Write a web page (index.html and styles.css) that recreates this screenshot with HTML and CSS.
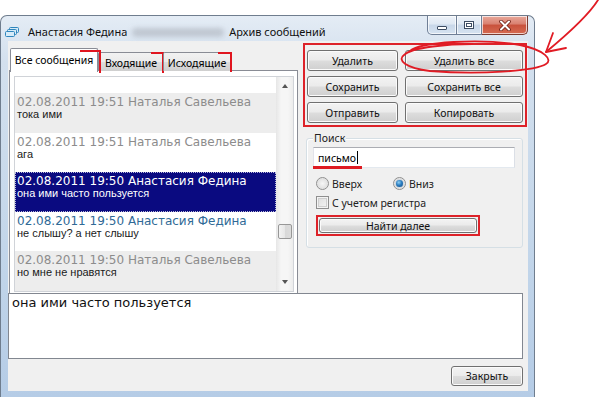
FILE: index.html
```html
<!DOCTYPE html>
<html lang="ru">
<head>
<meta charset="utf-8">
<title>Архив сообщений</title>
<link rel="stylesheet" href="styles.css">
</head>
<body>
<div class="window">
  <div class="titlebar">
    <svg class="appicon" width="14" height="11" viewBox="0 0 14 11">
      <rect x="4.5" y="0.5" width="9" height="5" rx="1" fill="#d6ebf8" stroke="#2f86bd"/>
      <rect x="2.5" y="2.5" width="9" height="5" rx="1" fill="#d6ebf8" stroke="#2f86bd"/>
      <rect x="0.5" y="4.5" width="9" height="5" rx="1" fill="#d6ebf8" stroke="#2f86bd"/>
    </svg>
    <span class="title">Анастасия Федина</span>
    <span class="blur"></span>
    <span class="title">Архив сообщений</span>
    <div class="controls">
      <div class="cbtn cmin"><span class="minbar"></span></div>
      <div class="cbtn cmax"><span class="maxbox"></span></div>
      <div class="cbtn cclose">
        <svg width="14" height="11" viewBox="0 0 14 11">
          <path d="M3 1.5 L11 9.5 M11 1.5 L3 9.5" stroke="#6b1e14" stroke-width="3.6" stroke-linecap="round"/>
          <path d="M3 1.5 L11 9.5 M11 1.5 L3 9.5" stroke="#ffffff" stroke-width="2" stroke-linecap="round"/>
        </svg>
      </div>
    </div>
  </div>
  <div class="client">
    <div class="toprow">
      <div class="tabs">
        <div class="tabstrip">
          <div class="tab active t1">Все сообщения</div>
          <div class="tab t2">Входящие</div>
          <div class="tab t3">Исходящие</div>
        </div>
        <div class="tabbody">
          <div class="list">
            <div class="items">
              <div class="item alt">
                <div class="hdr">02.08.2011 19:51 Наталья Савельева</div>
                <div class="msg">тока ими</div>
              </div>
              <div class="item">
                <div class="hdr">02.08.2011 19:51 Наталья Савельева</div>
                <div class="msg">ага</div>
              </div>
              <div class="item sel">
                <div class="hdr">02.08.2011 19:50 Анастасия Федина</div>
                <div class="msg">она ими часто пользуется</div>
              </div>
              <div class="item">
                <div class="hdr me">02.08.2011 19:50 Анастасия Федина</div>
                <div class="msg">не слышу? а нет слышу</div>
              </div>
              <div class="item alt">
                <div class="hdr">02.08.2011 19:50 Наталья Савельева</div>
                <div class="msg">но мне не нравятся</div>
              </div>
            </div>
            <div class="scrollbar">
              <div class="sbtn"><span class="arr up"></span></div>
              <div class="track"><div class="thumb"></div></div>
              <div class="sbtn"><span class="arr down"></span></div>
            </div>
          </div>
        </div>
      </div>
      <div class="side">
        <div class="btngroup">
          <div class="btn">Удалить</div>
          <div class="btn">Удалить все</div>
          <div class="btn">Сохранить</div>
          <div class="btn">Сохранить все</div>
          <div class="btn">Отправить</div>
          <div class="btn">Копировать</div>
        </div>
        <div class="search">
          <div class="legend">Поиск</div>
          <div class="input"><span class="val">письмо</span><span class="caret"></span></div>
          <div class="radios">
            <div class="opt up"><span class="radio"></span><span>Вверх</span></div>
            <div class="opt"><span class="radio on"></span><span>Вниз</span></div>
          </div>
          <div class="opt check"><span class="checkbox"></span><span>С учетом регистра</span></div>
          <div class="redbox"><div class="btn find">Найти далее</div></div>
        </div>
      </div>
    </div>
    <div class="memo">она ими часто пользуется</div>
    <div class="bottom"><div class="btn closebtn">Закрыть</div></div>
  </div>
</div>
<svg class="annot" width="600" height="397" viewBox="0 0 600 397">
  <path d="M410 51 C420 42, 480 38, 520 45 C545 50, 553 60, 546 64 C535 71, 480 75, 430 71 C405 68, 397 60, 404 55 C412 47, 450 44, 472 44" fill="none" stroke="#e11b24" stroke-width="1.8" stroke-linecap="round"/>
  <path d="M598 0 C590 13, 575 28, 546 52" fill="none" stroke="#e11b24" stroke-width="1.8" stroke-linecap="round"/>
  <path d="M553 33 L546 52 L566 48" fill="none" stroke="#e11b24" stroke-width="1.8" stroke-linecap="round" stroke-linejoin="round"/>
</svg>
</body>
</html>
```
FILE: styles.css
```css
* { box-sizing: border-box; }
html, body { margin: 0; padding: 0; }
body {
  width: 600px;
  height: 397px;
  overflow: hidden;
  position: relative;
  background: #ffffff;
  font-family: "Noto Sans", "Open Sans", sans-serif;
  font-size: 10.5px;
  color: #000;
}

.window {
  margin-top: 15px;
  width: 535px;
  height: 382px;
  border: 1px solid #6f7d8e;
  border-bottom: none;
  border-radius: 7px 7px 0 0;
  background: linear-gradient(180deg, #e4ecf5 0%, #d3e0ee 12%, #c3d6ea 60%, #b5cce6 100%);
  padding: 0 6px 0 7px;
  display: flex;
  flex-direction: column;
}

.titlebar {
  height: 25px;
  display: flex;
  align-items: flex-start;
  flex: none;
}
.appicon { margin: 11px 0 0 -3px; flex: none; }
.title {
  margin-top: 8px;
  line-height: 15px;
  font-size: 11px;
  color: #111;
  white-space: nowrap;
}
.appicon + .title { margin-left: 9px; }
.blur {
  width: 92px;
  height: 9px;
  margin: 12px 5px 0 5px;
  background: #b9c0ca;
  border-radius: 4px;
  filter: blur(2.5px);
  opacity: 0.8;
}
.controls {
  margin-left: auto;
  display: flex;
  height: 19px;
}
.cbtn {
  height: 19px;
  border: 1px solid #6f7f96;
  border-top: none;
  display: flex;
  align-items: center;
  justify-content: center;
  background: linear-gradient(180deg, #eef3f9 0%, #dfe8f3 45%, #c8d7e9 50%, #d6e3f1 100%);
  box-shadow: inset 0 0 0 1px rgba(255,255,255,0.7);
}
.cmin { width: 30px; border-radius: 0 0 0 5px; }
.cmax { width: 25px; border-left: none; }
.cclose {
  width: 46px;
  border-left: none;
  border-radius: 0 0 5px 0;
  border-color: #7a3a30;
  background: linear-gradient(180deg, #e9a99b 0%, #d98070 45%, #c8513c 50%, #d66b52 100%);
}
.minbar {
  width: 10px;
  height: 4px;
  margin-top: 5px;
  background: #fff;
  border: 1px solid #3d4c62;
  border-radius: 1px;
}
.maxbox {
  width: 10px;
  height: 8px;
  border: 1px solid #3d4c62;
  background: #fff;
  box-shadow: inset 0 0 0 1px #fff, inset 0 0 0 2px #3d4c62;
}

.client {
  height: 350px;
  background: #f0f0f0;
  display: flex;
  flex-direction: column;
  flex: none;
}

.toprow {
  display: flex;
  align-items: flex-start;
  padding-top: 2px;
  height: 247px;
}

.tabs {
  width: 289px;
  height: 240px;
  margin: 5px 0 0 1px;
  display: flex;
  flex-direction: column;
}
.tabstrip {
  height: 23px;
  display: flex;
  align-items: flex-end;
  padding-left: 1px;
  flex: none;
}
.tab {
  position: relative;
  height: 19px;
  border: 1px solid #898c95;
  border-bottom: none;
  border-radius: 2px 2px 0 0;
  background: linear-gradient(180deg, #f2f2f2 0%, #ebebeb 50%, #dddddd 50%, #cfcfcf 100%);
  text-align: center;
  line-height: 18px;
  padding-top: 1px;
  white-space: nowrap;
}
.tab.active {
  height: 24px;
  margin-bottom: -1px;
  background: #fff;
  z-index: 2;
  line-height: 22px;
  padding-top: 0;
}
.t1 { width: 88px; }
.t2 { width: 66px; }
.t3 { width: 68px; margin-left: -1px; }
.tab::after {
  content: "";
  position: absolute;
  border-top: 2.5px solid #e0151f;
  border-right: 2.5px solid #e0151f;
}
.t1::after { top: 1px; right: -4px; width: 19px; height: 21px; }
.t2::after { top: -1px; right: -1px; width: 11px; height: 19px; }
.t3::after { top: -1px; right: -2px; width: 12px; height: 18px; }

.tabbody {
  flex: 1;
  border: 1px solid #898c95;
  background: #fff;
  margin-top: -1px;
  display: flex;
}
.list {
  flex: 1;
  margin: 5px 3px 4px 4px;
  border: 1px solid #d0d3d8;
  display: flex;
  overflow: hidden;
}
.items {
  flex: 1;
  padding-top: 16px;
  overflow: hidden;
}
.item {
  height: 39.5px;
  padding: 2px 2px 0 2px;
}
.item.alt { background: #ededed; }
.item.sel {
  background: #0a0a80;
  border: 1px dotted #b9b9d8;
  padding: 1px 1px 0 1px;
}
.hdr {
  font-family: "DejaVu Sans", sans-serif;
  font-size: 12px;
  line-height: 14px;
  color: #8c8c8c;
  white-space: nowrap;
}
.hdr.me { color: #2f6a96; }
.msg {
  font-family: "Liberation Sans", Arial, sans-serif;
  font-size: 11px;
  line-height: 11px;
  color: #1a1a1a;
  white-space: nowrap;
}
.sel .hdr, .sel .msg { color: #fff; }

.scrollbar {
  width: 17px;
  display: flex;
  flex-direction: column;
  background: linear-gradient(90deg, #e6e6e6, #f6f6f6 30%, #f6f6f6 70%, #ececec);
}
.sbtn {
  height: 17px;
  display: flex;
  align-items: center;
  justify-content: center;
  flex: none;
}
.arr { width: 0; height: 0; border-left: 3.5px solid transparent; border-right: 3.5px solid transparent; }
.arr.up { border-bottom: 4px solid #555; }
.arr.down { border-top: 4px solid #555; }
.track { flex: 1; padding: 130px 1px 0 2px; }
.thumb {
  height: 15px;
  border: 1px solid #979797;
  border-radius: 2px;
  background: linear-gradient(90deg, #f3f3f3, #e6e6e6 50%, #d8d8d8 50%, #dcdcdc);
}

.side {
  width: 224px;
  margin-left: 5px;
  display: flex;
  flex-direction: column;
}
.btngroup {
  border: 2px solid #dd2229;
  padding: 5px 2px 2px 2px;
  display: grid;
  grid-template-columns: 91px 118px;
  grid-auto-rows: 21px;
  column-gap: 7px;
  row-gap: 5px;
}
.btn {
  border: 1px solid #707070;
  border-radius: 3px;
  background: linear-gradient(180deg, #f3f3f3 0%, #ebebeb 48%, #dddddd 52%, #cfcfcf 100%);
  box-shadow: inset 0 0 0 1px #fbfbfb;
  display: flex;
  align-items: center;
  justify-content: center;
  white-space: nowrap;
  color: #111;
}

.search {
  margin: 11px 0 0 3px;
  width: 217px;
  height: 110px;
  border: 1px solid #d5dfe5;
  border-radius: 3px;
  padding: 0 7px 0 6px;
  box-shadow: inset 1px 1px 0 #fff;
}
.legend {
  margin: -8px 0 0 0;
  width: max-content;
  padding: 0 1px;
  line-height: 14px;
  color: #222;
  background: #f0f0f0;
}
.input {
  position: relative;
  margin-top: 2px;
  height: 21px;
  border: 1px solid #abadb3;
  border-color: #abadb3 #dbdfe6 #e3e9ef #e2e3ea;
  background: #fff;
  display: flex;
  align-items: center;
  padding-left: 4px;
}
.input::after {
  content: "";
  position: absolute;
  left: -1px;
  bottom: -2px;
  width: 49px;
  height: 3px;
  background: #de1b22;
}
.caret { width: 1px; height: 13px; background: #000; margin-left: 1px; }

.radios { display: flex; margin-top: 8px; height: 15px; }
.opt {
  display: flex;
  align-items: center;
  gap: 3px;
  height: 15px;
  margin-left: 3px;
  color: #222;
}
.opt.up { width: 77px; }
.radios .opt + .opt { margin-left: 0; }
.radio {
  width: 13px;
  height: 13px;
  border-radius: 50%;
  border: 1px solid #8f8f8f;
  background: radial-gradient(circle at 50% 50%, #f6f6f6 0%, #e2e2e2 60%, #f4f4f4 100%);
  display: flex;
  align-items: center;
  justify-content: center;
}
.radio.on::after {
  content: "";
  width: 7px;
  height: 7px;
  border-radius: 50%;
  background: radial-gradient(circle at 40% 35%, #8fd0f5 0%, #2b7dc0 45%, #0e4a86 100%);
  box-shadow: 0 0 1px #1a5d99;
}
.check { margin-top: 4px; }
.checkbox {
  width: 13px;
  height: 13px;
  border: 1px solid #8f8f8f;
  background: linear-gradient(135deg, #dcdcdc, #f6f6f6);
  box-shadow: inset 0 0 0 1px #f4f4f4, inset 0 0 0 2px #cfcfcf;
}
.redbox {
  margin: 5px 0 0 3px;
  width: 164px;
  height: 21px;
  border: 2px solid #dd2229;
  padding: 1px;
}
.find { height: 100%; }

.memo {
  margin-top: 5px;
  width: 515px;
  height: 66px;
  border: 1px solid #828790;
  background: #fff;
  font-family: "DejaVu Sans", sans-serif;
  font-size: 13px;
  line-height: 15px;
  padding: 1px 3px;
  color: #111;
}
.bottom {
  display: flex;
  justify-content: flex-end;
  padding-right: 5px;
  margin-top: 7px;
}
.closebtn { width: 72px; height: 20px; }

.annot {
  position: absolute;
  left: 0;
  top: 0;
  pointer-events: none;
}
```
